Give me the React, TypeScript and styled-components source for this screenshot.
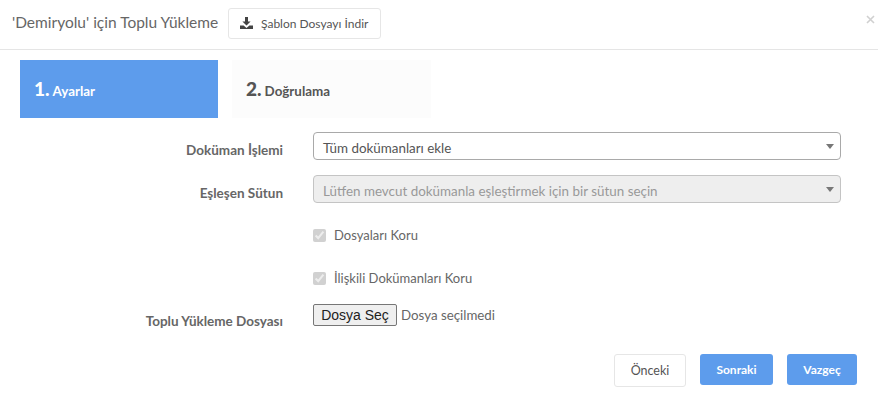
import React from 'react';
import styled, { createGlobalStyle } from 'styled-components';

const Global = createGlobalStyle`
  html, body { margin: 0; padding: 0; background: #fff; }
  body { font-family: Lato, "Open Sans", sans-serif; color: #555; }
`;

const Modal = styled.div`
  width: 878px;
  height: 407px;
  overflow: hidden;
  display: flex;
  flex-direction: column;
`;

const Header = styled.div`
  height: 49px;
  border-bottom: 1px solid #e5e5e5;
  display: flex;
  align-items: center;
  padding: 0 3px 0 12px;
  box-sizing: content-box;
`;

const Title = styled.div`
  font-size: 15.5px;
  color: #666;
  width: 216px;
  margin-top: -6px;
  white-space: nowrap;
`;

const TemplateButton = styled.button`
  width: 153px;
  height: 31px;
  margin-top: -3px;
  border: 1px solid #e6e6e6;
  border-radius: 3px;
  background: #fff;
  font: 12px Lato, sans-serif;
  color: #555;
  display: flex;
  align-items: center;
  padding: 0 0 0 11px;
  gap: 8px;
  white-space: nowrap;
`;

const Close = styled.div`
  margin-left: auto;
  margin-top: -11px;
  display: flex;
`;

const Tabs = styled.div`
  display: flex;
  gap: 14px;
  padding: 10px 0 0 20px;
`;

const Tab = styled.div<{ $active?: boolean }>`
  width: ${p => (p.$active ? 198 : 199)}px;
  height: 58px;
  box-sizing: border-box;
  padding: 17px 0 0 14px;
  display: flex;
  align-items: baseline;
  gap: 3px;
  background: ${p => (p.$active ? '#5d9cec' : '#fcfcfc')};
  color: ${p => (p.$active ? '#fff' : '#555')};
  font-size: 13.4px;
  font-weight: 700;
`;

const TabNumber = styled.span`
  font-size: 19px;
  font-weight: 900;
`;

const Form = styled.div`
  display: grid;
  grid-template-columns: 263px 528px;
  column-gap: 30px;
  padding: 14px 0 0 20px;
`;

const Label = styled.div<{ $mt?: number }>`
  text-align: right;
  font-size: 13.5px;
  font-weight: 700;
  color: #666;
  margin-top: ${p => p.$mt ?? 0}px;
  line-height: 18px;
`;

const Select = styled.div<{ $disabled?: boolean }>`
  height: 28px;
  box-sizing: border-box;
  border: 1px solid ${p => (p.$disabled ? '#c4c4c4' : '#a9a9a9')};
  border-radius: 4px;
  background: ${p => (p.$disabled ? '#eeeeee' : '#fff')};
  color: ${p => (p.$disabled ? '#999' : '#555')};
  font-size: 13.4px;
  display: flex;
  align-items: center;
  justify-content: space-between;
  padding: 0 6px 0 9px;
  margin-bottom: 15px;
`;

const SelectText = styled.span`
  padding-top: 3px;
`;

const Arrow = styled.span`
  width: 0;
  height: 0;
  border-left: 4px solid transparent;
  border-right: 4px solid transparent;
  border-top: 5px solid #777;
`;

const CheckRow = styled.label<{ $mb: number }>`
  grid-column: 2;
  display: flex;
  align-items: center;
  gap: 8px;
  height: 20px;
  font-size: 13px;
  color: #666;
  margin: 7px 0 ${p => p.$mb}px;
`;

const Check = styled.input`
  width: 13px;
  height: 13px;
  margin: 0;
`;

const FileRow = styled.div`
  display: flex;
  align-items: center;
  gap: 4px;
  font-size: 13.3px;
  color: #666;
  height: 22px;
`;

const FileButton = styled.button`
  width: 84px;
  height: 22px;
  padding: 0;
  border: 1px solid #767676;
  border-radius: 2px;
  background: #efefef;
  font: 14px "Liberation Sans", Arial, sans-serif;
  color: #222;
`;

const Footer = styled.div`
  display: flex;
  justify-content: flex-end;
  align-items: flex-start;
  gap: 14px;
  padding: 24px 21px 0 0;
`;

const Action = styled.button<{ $primary?: boolean; $w: number }>`
  width: ${p => p.$w}px;
  height: ${p => (p.$primary ? 31 : 33)}px;
  border-radius: 3px;
  border: ${p => (p.$primary ? 'none' : '1px solid #e6e6e6')};
  background: ${p => (p.$primary ? '#5d9cec' : '#fff')};
  color: ${p => (p.$primary ? '#fff' : '#555')};
  font: ${p => (p.$primary ? 700 : 400)} ${p => (p.$primary ? 12 : 12.5)}px Lato, sans-serif;
  padding: 0;
`;

export default function App() {
  return (
    <Modal>
      <Global />
      <Header>
        <Title>'Demiryolu' için Toplu Yükleme</Title>
        <TemplateButton>
          <svg width="13" height="13" viewBox="0 0 13 13" fill="#444">
            <path d="M5 0h3v4.5h2.6L6.5 8.6 2.4 4.5H5z" />
            <path d="M0 8.5h3.6l2.9 2.4 2.9-2.4H13V12H0z" />
          </svg>
          Şablon Dosyayı İndir
        </TemplateButton>
        <Close>
          <svg width="9" height="9" viewBox="0 0 9 9" stroke="#d0d0d0" strokeWidth="1.6">
            <path d="M1 1l7 7M8 1L1 8" />
          </svg>
        </Close>
      </Header>
      <Tabs>
        <Tab $active>
          <TabNumber>1.</TabNumber> Ayarlar
        </Tab>
        <Tab>
          <TabNumber>2.</TabNumber> Doğrulama
        </Tab>
      </Tabs>
      <Form>
        <Label $mt={9}>Doküman İşlemi</Label>
        <Select>
          <SelectText>Tüm dokümanları ekle</SelectText>
          <Arrow />
        </Select>
        <Label $mt={9}>Eşleşen Sütun</Label>
        <Select $disabled>
          <SelectText>Lütfen mevcut dokümanla eşleştirmek için bir sütun seçin</SelectText>
          <Arrow />
        </Select>
        <CheckRow $mb={16}>
          <Check type="checkbox" checked disabled readOnly />
          Dosyaları Koru
        </CheckRow>
        <CheckRow $mb={16}>
          <Check type="checkbox" checked disabled readOnly />
          İlişkili Dokümanları Koru
        </CheckRow>
        <Label $mt={8}>Toplu Yükleme Dosyası</Label>
        <FileRow>
          <FileButton>Dosya Seç</FileButton>
          Dosya seçilmedi
        </FileRow>
      </Form>
      <Footer>
        <Action $w={72}>Önceki</Action>
        <Action $primary $w={73}>Sonraki</Action>
        <Action $primary $w={70}>Vazgeç</Action>
      </Footer>
    </Modal>
  );
}
